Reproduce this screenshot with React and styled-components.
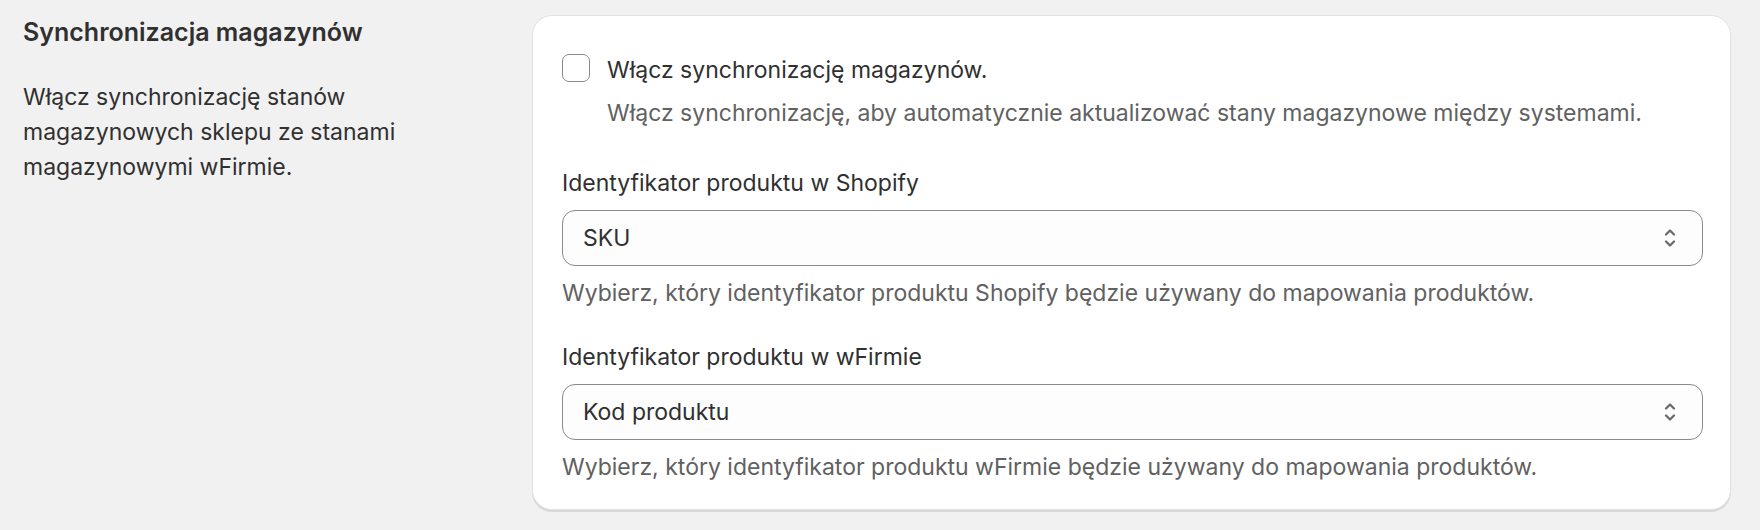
import React from 'react'
import styled, { createGlobalStyle } from 'styled-components'

const GlobalStyle = createGlobalStyle`
    body {
        margin: 0;
        background: #f1f1f1;
        font-family: Inter, "Noto Sans", "DejaVu Sans", sans-serif;
        color: #303030;
        -webkit-font-smoothing: antialiased;
    }
`

const Page = styled.div`
    display: grid;
    grid-template-columns: 480px 1fr;
    column-gap: 29px;
    padding: 15px 29px 21px 23px;
`

const Annotation = styled.div`
    padding-top: 1px;
`

const Title = styled.h2`
    margin: 0;
    font-size: 25px;
    line-height: 32px;
    font-weight: 600;
    color: #303030;
`

const Description = styled.p`
    margin: 32px 0 0;
    max-width: 440px;
    font-size: 23px;
    line-height: 35px;
    color: #303030;
`

const Card = styled.div`
    background: #fff;
    border: 1px solid #e2e2e2;
    border-radius: 20px;
    box-shadow: 0 2px 0 0 rgba(0, 0, 0, 0.1);
    padding: 37px 27px 24px 29px;
    display: flex;
    flex-direction: column;
`

const CheckRow = styled.label`
    display: flex;
    align-items: flex-start;
    gap: 17px;
    margin-bottom: 35px;
    cursor: pointer;
`

const Box = styled.span`
    flex: none;
    width: 28px;
    height: 28px;
    margin-top: 1px;
    box-sizing: border-box;
    border: 1px solid #8a8a8a;
    border-radius: 7px;
    background: #fff;
`

const CheckText = styled.div`
    display: flex;
    flex-direction: column;
    gap: 8px;
`

const Text = styled.span`
    font-size: 23px;
    line-height: 35px;
    color: ${p => (p.$muted ? '#616161' : '#303030')};
`

const Field = styled.div`
    display: flex;
    flex-direction: column;
    & + & {
        margin-top: 29px;
    }
`

const Label = styled.div`
    font-size: 23px;
    line-height: 35px;
    color: #303030;
    margin-bottom: 9px;
`

const SelectBox = styled.div`
    display: flex;
    align-items: center;
    justify-content: space-between;
    height: 56px;
    box-sizing: border-box;
    border: 1px solid #8a8a8a;
    border-radius: 13px;
    background: #fdfdfd;
    padding: 0 26px 0 20px;
    font-size: 23px;
    color: #303030;
`

const Help = styled.div`
    margin-top: 10px;
    font-size: 23px;
    line-height: 35px;
    color: #616161;
`

const SelectIcon = () => (
    <svg width="12" height="22" viewBox="0 0 12 22" fill="none" stroke="#6b6b6b" strokeWidth="2.3" strokeLinecap="round" strokeLinejoin="round">
        <polyline points="2,7.5 6,3.5 10,7.5" />
        <polyline points="2,14.5 6,18.5 10,14.5" />
    </svg>
)

const Select = ({ label, value, help }) => (
    <Field>
        <Label>{label}</Label>
        <SelectBox>
            <span>{value}</span>
            <SelectIcon />
        </SelectBox>
        <Help>{help}</Help>
    </Field>
)

export default function App() {
    return (
        <>
            <GlobalStyle />
            <Page>
                <Annotation>
                    <Title>Synchronizacja magazynów</Title>
                    <Description>
                        Włącz synchronizację stanów magazynowych sklepu ze stanami magazynowymi wFirmie.
                    </Description>
                </Annotation>
                <Card>
                    <CheckRow>
                        <Box />
                        <CheckText>
                            <Text>Włącz synchronizację magazynów.</Text>
                            <Text $muted>
                                Włącz synchronizację, aby automatycznie aktualizować stany magazynowe między systemami.
                            </Text>
                        </CheckText>
                    </CheckRow>
                    <Select
                        label="Identyfikator produktu w Shopify"
                        value="SKU"
                        help="Wybierz, który identyfikator produktu Shopify będzie używany do mapowania produktów."
                    />
                    <Select
                        label="Identyfikator produktu w wFirmie"
                        value="Kod produktu"
                        help="Wybierz, który identyfikator produktu wFirmie będzie używany do mapowania produktów."
                    />
                </Card>
            </Page>
        </>
    )
}
